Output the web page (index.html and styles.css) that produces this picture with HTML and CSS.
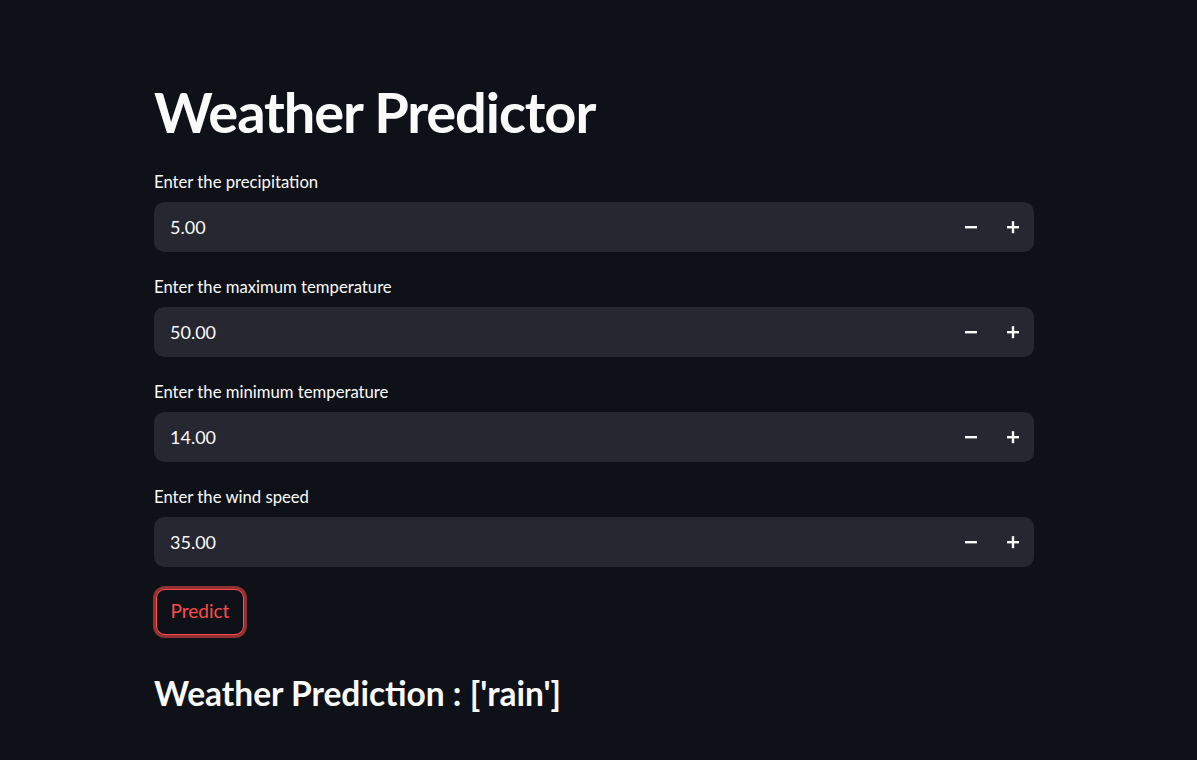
FILE: index.html
```html
<!DOCTYPE html>
<html>
<head>
<meta charset="utf-8">
<link rel="stylesheet" href="styles.css">
</head>
<body>
<main class="main">
  <h1 class="title">Weather Predictor</h1>
  <div class="field">
    <label class="label">Enter the precipitation</label>
    <div class="number-input">
      <span class="value">5.00</span>
      <button class="step"><svg width="14" height="14" viewBox="0 0 14 14"><rect x="1" y="6" width="12" height="2.4" fill="#fafafa"/></svg></button>
      <button class="step"><svg width="14" height="14" viewBox="0 0 14 14"><rect x="1" y="6" width="12" height="2.4" fill="#fafafa"/><rect x="5.8" y="1.2" width="2.4" height="12" fill="#fafafa"/></svg></button>
    </div>
  </div>
  <div class="field">
    <label class="label">Enter the maximum temperature</label>
    <div class="number-input">
      <span class="value">50.00</span>
      <button class="step"><svg width="14" height="14" viewBox="0 0 14 14"><rect x="1" y="6" width="12" height="2.4" fill="#fafafa"/></svg></button>
      <button class="step"><svg width="14" height="14" viewBox="0 0 14 14"><rect x="1" y="6" width="12" height="2.4" fill="#fafafa"/><rect x="5.8" y="1.2" width="2.4" height="12" fill="#fafafa"/></svg></button>
    </div>
  </div>
  <div class="field">
    <label class="label">Enter the minimum temperature</label>
    <div class="number-input">
      <span class="value">14.00</span>
      <button class="step"><svg width="14" height="14" viewBox="0 0 14 14"><rect x="1" y="6" width="12" height="2.4" fill="#fafafa"/></svg></button>
      <button class="step"><svg width="14" height="14" viewBox="0 0 14 14"><rect x="1" y="6" width="12" height="2.4" fill="#fafafa"/><rect x="5.8" y="1.2" width="2.4" height="12" fill="#fafafa"/></svg></button>
    </div>
  </div>
  <div class="field">
    <label class="label">Enter the wind speed</label>
    <div class="number-input">
      <span class="value">35.00</span>
      <button class="step"><svg width="14" height="14" viewBox="0 0 14 14"><rect x="1" y="6" width="12" height="2.4" fill="#fafafa"/></svg></button>
      <button class="step"><svg width="14" height="14" viewBox="0 0 14 14"><rect x="1" y="6" width="12" height="2.4" fill="#fafafa"/><rect x="5.8" y="1.2" width="2.4" height="12" fill="#fafafa"/></svg></button>
    </div>
  </div>
  <button class="predict">Predict</button>
  <h3 class="result">Weather Prediction : ['rain']</h3>
</main>
</body>
</html>
```

FILE: styles.css
```css
* { box-sizing: border-box; }
html, body {
  margin: 0;
  padding: 0;
  background: #0e1117;
  color: #fafafa;
  font-family: Lato, "Noto Sans", sans-serif;
}
.main {
  width: 880px;
  margin-left: 154px;
  padding-top: 78px;
  display: flex;
  flex-direction: column;
}
.title {
  margin: 0 0 26px 0;
  font-size: 56px;
  line-height: 68px;
  font-weight: 700;
  letter-spacing: -1.1px;
}
.field {
  display: flex;
  flex-direction: column;
  margin-bottom: 25px;
}
.field:nth-last-of-type(1) { margin-bottom: 22px; }
.label {
  font-size: 16.7px;
  line-height: 20px;
  margin-bottom: 10px;
}
.number-input {
  height: 50px;
  background: #262730;
  border-radius: 10px;
  display: flex;
  align-items: center;
  padding-left: 16px;
  padding-right: 0;
}
.value {
  flex: 1;
  font-size: 18px;
}
.step {
  width: 42px;
  height: 50px;
  background: transparent;
  border: none;
  padding: 0;
  display: flex;
  align-items: center;
  justify-content: center;
}
.predict {
  align-self: flex-start;
  margin-left: 2px;
  width: 88px;
  height: 46px;
  background: #0e1117;
  color: #ff4b4b;
  border: 1px solid #ff4b4b;
  border-radius: 9px;
  box-shadow: 0 0 0 3px rgba(255, 75, 75, 0.55);
  font-family: Lato, "Noto Sans", sans-serif;
  font-size: 19px;
  padding: 0 0 3px 0;
}
.result {
  margin: 38px 0 0 0;
  font-size: 33.5px;
  line-height: 40px;
  font-weight: 700;
}
```
